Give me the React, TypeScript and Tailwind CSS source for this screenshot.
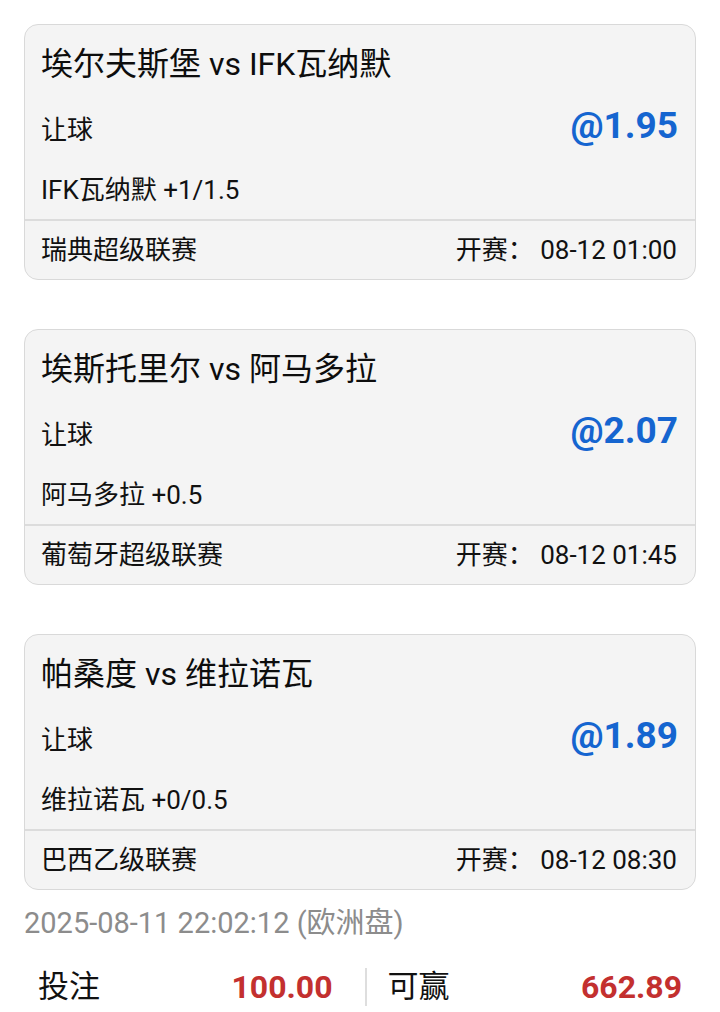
import React from "react";

interface Bet {
  match: string;
  market: string;
  odds: string;
  pick: string;
  league: string;
  kickoff: string;
}

const bets: Bet[] = [
  {
    match: "埃尔夫斯堡 vs IFK瓦纳默",
    market: "让球",
    odds: "@1.95",
    pick: "IFK瓦纳默 +1/1.5",
    league: "瑞典超级联赛",
    kickoff: "08-12 01:00",
  },
  {
    match: "埃斯托里尔 vs 阿马多拉",
    market: "让球",
    odds: "@2.07",
    pick: "阿马多拉 +0.5",
    league: "葡萄牙超级联赛",
    kickoff: "08-12 01:45",
  },
  {
    match: "帕桑度 vs 维拉诺瓦",
    market: "让球",
    odds: "@1.89",
    pick: "维拉诺瓦 +0/0.5",
    league: "巴西乙级联赛",
    kickoff: "08-12 08:30",
  },
];

const font = { fontFamily: 'Roboto, "Noto Sans CJK SC", sans-serif' };

const BetCard = ({ bet }: { bet: Bet }) => {
  return (
    <div className="rounded-[14px] border border-[#d9d9d9] bg-[#f4f4f4]">
      <div className="px-4 pt-[19px] pb-[11px]">
        <div className="h-10 flex items-center text-[32px] font-normal text-[#0d0d0d]">
          {bet.match}
        </div>
        <div className="mt-[26px] h-10 flex items-center justify-between">
          <span className="text-[26px] text-[#111]">{bet.market}</span>
          <span className="text-[37px] font-bold text-[#1565d0] pr-[1px] -mt-2">
            {bet.odds}
          </span>
        </div>
        <div className="mt-[22px] h-9 flex items-center text-[26px] text-[#111]">
          {bet.pick}
        </div>
      </div>
      <div className="h-[2px] bg-[#dcdcdc]" />
      <div className="h-[58px] px-4 flex items-center justify-between text-[26px] text-[#111]">
        <span>{bet.league}</span>
        <span className="pr-[2px]">开赛： {bet.kickoff}</span>
      </div>
    </div>
  );
};

export default function App() {
  return (
    <div className="w-[720px] h-[1012px] bg-white overflow-hidden" style={font}>
      <div className="px-6 pt-6 flex flex-col gap-[49px]">
        {bets.map((b) => (
          <BetCard key={b.match} bet={b} />
        ))}
      </div>
      <div className="px-6 mt-[16px] h-[36px] flex items-center text-[29px] text-[#8c8c8c]">
        2025-08-11 22:02:12 (欧洲盘)
      </div>
      <div className="mt-[22px] h-[46px] flex items-center pl-[38px] pr-[38px]">
        <div className="flex-1 flex items-center justify-between pr-[32px]">
          <span className="text-[31px] text-[#111]">投注</span>
          <span className="text-[32px] font-bold text-[#c3302f]">100.00</span>
        </div>
        <div className="w-[2px] h-[38px] bg-[#dedede]" />
        <div className="flex-1 flex items-center justify-between pl-[21px]">
          <span className="text-[31px] text-[#111]">可赢</span>
          <span className="text-[32px] font-bold text-[#c3302f]">662.89</span>
        </div>
      </div>
    </div>
  );
}
